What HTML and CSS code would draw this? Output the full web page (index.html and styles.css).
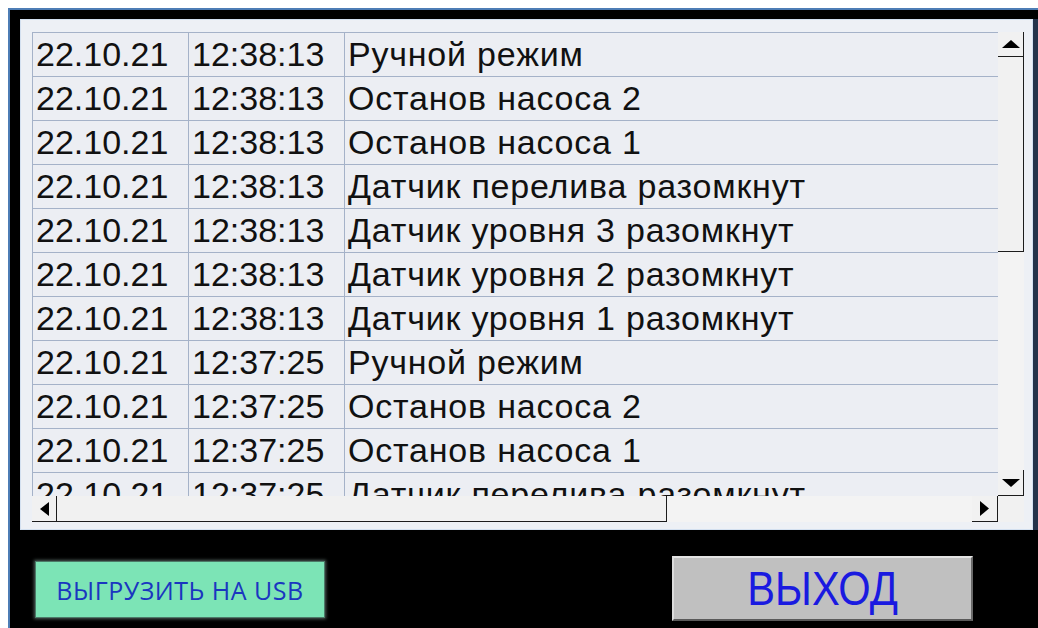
FILE: index.html
```html
<!DOCTYPE html>
<html lang="ru">
<head>
<meta charset="utf-8">
<title>Журнал событий</title>
<link rel="stylesheet" href="styles.css">
</head>
<body>
<div class="window">
  <div class="panel">
    <div class="log">
      <div class="view">
        <table class="events">
          <colgroup><col class="c-date"><col class="c-time"><col class="c-text"></colgroup>
          <tbody>
            <tr><td>22.10.21</td><td>12:38:13</td><td class="msg">Ручной режим</td></tr>
            <tr><td>22.10.21</td><td>12:38:13</td><td class="msg">Останов насоса 2</td></tr>
            <tr><td>22.10.21</td><td>12:38:13</td><td class="msg">Останов насоса 1</td></tr>
            <tr><td>22.10.21</td><td>12:38:13</td><td class="msg">Датчик перелива разомкнут</td></tr>
            <tr><td>22.10.21</td><td>12:38:13</td><td class="msg">Датчик уровня 3 разомкнут</td></tr>
            <tr><td>22.10.21</td><td>12:38:13</td><td class="msg">Датчик уровня 2 разомкнут</td></tr>
            <tr><td>22.10.21</td><td>12:38:13</td><td class="msg">Датчик уровня 1 разомкнут</td></tr>
            <tr><td>22.10.21</td><td>12:37:25</td><td class="msg">Ручной режим</td></tr>
            <tr><td>22.10.21</td><td>12:37:25</td><td class="msg">Останов насоса 2</td></tr>
            <tr><td>22.10.21</td><td>12:37:25</td><td class="msg">Останов насоса 1</td></tr>
            <tr><td>22.10.21</td><td>12:37:25</td><td class="msg">Датчик перелива разомкнут</td></tr>
            <tr><td>22.10.21</td><td>12:37:25</td><td class="msg">Датчик уровня 3 разомкнут</td></tr>
          </tbody>
        </table>
      </div>
      <div class="vscroll">
        <div class="sb-btn sb-up"><svg width="18" height="8" viewBox="0 0 18 8"><polygon points="9,0 18,8 0,8"/></svg></div>
        <div class="sb-thumb sb-thumb-v"></div>
        <div class="sb-track"></div>
        <div class="sb-btn sb-down"><svg width="18" height="8" viewBox="0 0 18 8"><polygon points="0,0 18,0 9,8"/></svg></div>
      </div>
      <div class="hscroll">
        <div class="sb-btn sb-left"><svg width="9" height="14" viewBox="0 0 9 14"><polygon points="9,0 9,14 0,7"/></svg></div>
        <div class="sb-thumb sb-thumb-h"></div>
        <div class="sb-track"></div>
        <div class="sb-btn sb-right"><svg width="9" height="15" viewBox="0 0 9 15"><polygon points="0,0 9,7.5 0,15"/></svg></div>
      </div>
      <div class="corner"></div>
    </div>
  </div>
  <div class="actions">
    <button class="btn btn-usb">ВЫГРУЗИТЬ НА USB</button>
    <button class="btn btn-exit"><span class="exit-label">ВЫХОД</span></button>
  </div>
</div>
</body>
</html>
```

FILE: styles.css
```css
html, body {
  overflow: hidden;
}

body {
  margin: 8px 0 0 8px;
  background: #ffffff;
}

/* operator screen frame */
.window {
  width: 1040px;
  height: 630px;
  background: #000000;
  border-top: 2px solid #4d7db5;
  border-left: 2px solid #4d7db5;
}

/* light panel holding the event log */
.panel {
  box-sizing: border-box;
  width: 1013px;
  height: 511px;
  margin: 9px 0 0 10px;
  padding: 12px 0 0 11px;
  background: #edf0f5;
  border: 1px solid #d3e0f0;
  box-shadow: 5px 0 0 #24334a;
}

.log {
  display: grid;
  grid-template-columns: 966px 26px;
  grid-template-rows: 464px 26px;
}

.view {
  overflow: hidden;
  background: #eceef3;
}

.events {
  border-collapse: collapse;
  table-layout: fixed;
  width: 1200px;
  font-family: "Liberation Sans", Arial, sans-serif;
  font-size: 34px;
  color: #111111;
}

.c-date,
.c-time {
  width: 156px;
}

.events td {
  height: 43px;
  padding: 0 3px;
  line-height: 43px;
  border: 1px solid #a5b2c8;
  white-space: nowrap;
  overflow: hidden;
}

.events td.msg {
  letter-spacing: 0.8px;
}

/* scroll bars */
.vscroll,
.hscroll {
  display: flex;
  background: #f3f3f3;
}

.vscroll {
  flex-direction: column;
}

.sb-btn {
  box-sizing: border-box;
  display: flex;
  align-items: center;
  justify-content: center;
  border-right: 1px solid #1c1c1c;
  border-bottom: 1px solid #1c1c1c;
  background: #f1f1f1;
  flex: none;
}

.sb-btn svg {
  display: block;
  fill: #000000;
}

.sb-up {
  height: 25px;
}

.sb-down {
  height: 26px;
}

.sb-left {
  width: 25px;
}

.sb-right {
  width: 26px;
}

.sb-thumb {
  box-sizing: border-box;
  flex: none;
  background: #f1f1f1;
  border-right: 1px solid #1c1c1c;
  border-bottom: 1px solid #1c1c1c;
}

.sb-thumb-v {
  height: 195px;
}

.sb-thumb-h {
  width: 610px;
}

.sb-track {
  flex: 1;
}

.corner {
  background: #f1f1f1;
}

/* bottom buttons */
.actions {
  display: flex;
  align-items: flex-start;
  padding-top: 26px;
}

.btn {
  box-sizing: border-box;
  margin: 0;
  padding: 0;
  cursor: pointer;
}

.btn-usb {
  width: 290px;
  height: 57px;
  margin: 5px 0 0 25px;
  background: #7ce4b6;
  border: 1px solid #4c7a68;
  box-shadow: 0 0 3px 1px #4e5c58;
  color: #1a36c0;
  font-family: "Open Sans", "Noto Sans", sans-serif;
  font-size: 25px;
  letter-spacing: 0.5px;
}

.btn-exit {
  width: 301px;
  height: 65px;
  margin-left: 347px;
  background: #c0c0c0;
  border: 2px solid;
  border-color: #e4e4e4 #6a6a6a #5a5a5a #dcdcdc;
  color: #1a1ae0;
  font-family: "Liberation Sans", Arial, sans-serif;
  font-size: 49px;
  line-height: 1;
}

/* tall, narrow caption */
.exit-label {
  display: inline-block;
  transform: scaleX(0.85);
}
```
